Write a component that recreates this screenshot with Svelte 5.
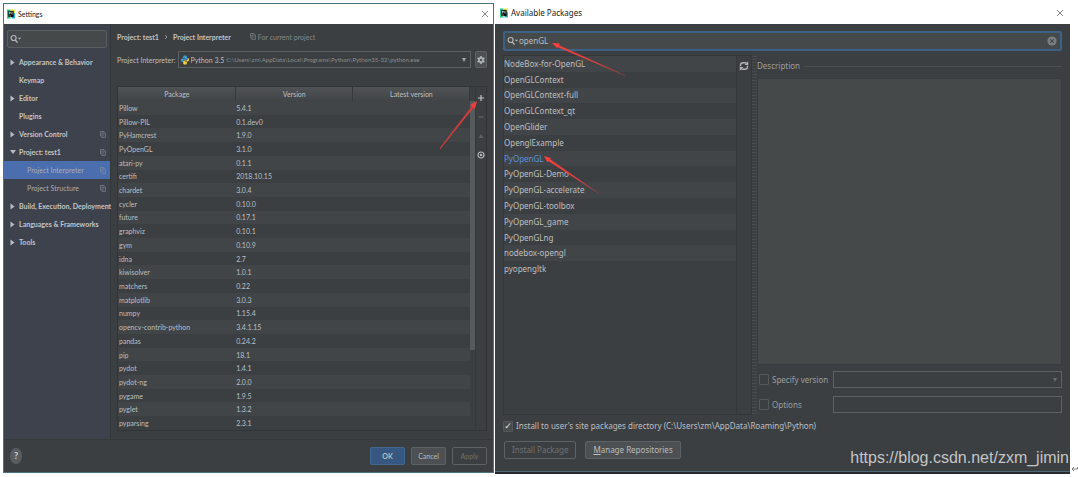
<script lang="ts">
	interface NavItem {
		label: string;
		arrow?: 'right' | 'down';
		child?: boolean;
		shared?: boolean;
		active?: boolean;
	}

	const navItems: NavItem[] = [
		{ label: 'Appearance & Behavior', arrow: 'right' },
		{ label: 'Keymap' },
		{ label: 'Editor', arrow: 'right' },
		{ label: 'Plugins' },
		{ label: 'Version Control', arrow: 'right', shared: true },
		{ label: 'Project: test1', arrow: 'down', shared: true },
		{ label: 'Project Interpreter', child: true, shared: true, active: true },
		{ label: 'Project Structure', child: true, shared: true },
		{ label: 'Build, Execution, Deployment', arrow: 'right' },
		{ label: 'Languages & Frameworks', arrow: 'right' },
		{ label: 'Tools', arrow: 'right' }
	];

	const installed = [
		['Pillow', '5.4.1'],
		['Pillow-PIL', '0.1.dev0'],
		['PyHamcrest', '1.9.0'],
		['PyOpenGL', '3.1.0'],
		['atari-py', '0.1.1'],
		['certifi', '2018.10.15'],
		['chardet', '3.0.4'],
		['cycler', '0.10.0'],
		['future', '0.17.1'],
		['graphviz', '0.10.1'],
		['gym', '0.10.9'],
		['idna', '2.7'],
		['kiwisolver', '1.0.1'],
		['matchers', '0.22'],
		['matplotlib', '3.0.3'],
		['numpy', '1.15.4'],
		['opencv-contrib-python', '3.4.1.15'],
		['pandas', '0.24.2'],
		['pip', '18.1'],
		['pydot', '1.4.1'],
		['pydot-ng', '2.0.0'],
		['pygame', '1.9.5'],
		['pyglet', '1.3.2'],
		['pyparsing', '2.3.1']
	];

	const available = [
		'NodeBox-for-OpenGL',
		'OpenGLContext',
		'OpenGLContext-full',
		'OpenGLContext_qt',
		'OpenGlider',
		'OpenglExample',
		'PyOpenGL',
		'PyOpenGL-Demo',
		'PyOpenGL-accelerate',
		'PyOpenGL-toolbox',
		'PyOpenGL_game',
		'PyOpenGLng',
		'nodebox-opengl',
		'pyopengltk'
	];

	let settingsQuery = $state('');
	let packageQuery = $state('openGL');
	let selectedPackage = $state('PyOpenGL');
	let userInstall = $state(true);
</script>

{#snippet appIcon()}
	<svg class="app-icon" viewBox="0 0 18 20" aria-hidden="true">
		<path d="M0 0h8l-4 20H0z" fill="#1fc7a0" />
		<path d="M6 0h12v9l-6 3z" fill="#e8ef50" />
		<path d="M10 20l2-10 6-2v12z" fill="#2bb7d6" />
		<path d="M0 13l10 7H0z" fill="#3bd98c" />
		<rect x="3" y="3" width="12" height="14" fill="#0b0b0b" />
		<path d="M5 5.500h2.500v3H5.500M5.500 5v6M13 6h-2.500v4H13M5 14.500h4" fill="none" stroke="#fff" stroke-width="1.200" />
	</svg>
{/snippet}

{#snippet closeIcon()}
	<svg class="close-icon" viewBox="0 0 8 8" aria-hidden="true">
		<path d="M1 1l6 6M7 1l-6 6" stroke="#777" stroke-width="0.900" />
	</svg>
{/snippet}

{#snippet searchIcon()}
	<svg class="search-icon" viewBox="0 0 12 10" aria-hidden="true">
		<circle cx="3.600" cy="4" r="2.500" fill="none" stroke="#b5b7b8" stroke-width="1.200" />
		<path d="M5.300 6L7.500 8.600" stroke="#b5b7b8" stroke-width="1.400" />
		<path d="M7.800 3.800h3.400L9.500 5.600z" fill="#b5b7b8" />
	</svg>
{/snippet}

{#snippet copyIcon()}
	<svg class="copy-icon" viewBox="0 0 6 7" aria-hidden="true">
		<path d="M1.500 5H0.500V0.500H4V1.500" fill="none" stroke="#8d949b" stroke-width="0.700" />
		<rect x="2" y="2" width="3.500" height="4.300" fill="none" stroke="#8d949b" stroke-width="0.700" />
		<path d="M3 3.700h1.500M3 4.900h1.500" stroke="#8d949b" stroke-width="0.500" />
	</svg>
{/snippet}

<main class="screen">
	<section class="window settings" aria-label="Settings">
		<header class="titlebar">
			{@render appIcon()}
			<h1>Settings</h1>
			<button class="bare" aria-label="Close settings">{@render closeIcon()}</button>
		</header>

		<div class="settings-body">
			<aside class="sidebar">
				<div class="side-search">
					{@render searchIcon()}
					<input type="text" aria-label="Search settings" bind:value={settingsQuery} />
				</div>
				<nav>
					{#each navItems as item}
						<a href="#settings" class="nav-item" class:child={item.child} class:active={item.active}>
							<span class="marker">
								{#if item.arrow}
									<svg viewBox="0 0 6 7" class:down={item.arrow === 'down'} aria-hidden="true">
										<path d="M0.500 0.500l4 3-4 3z" fill="#b9bcc0" />
									</svg>
								{/if}
							</span>
							<span class="nav-label">{item.label}</span>
							{#if item.shared}{@render copyIcon()}{/if}
						</a>
					{/each}
				</nav>
			</aside>

			<div class="content">
				<div class="crumbs">
					<strong>Project: test1</strong>
					<svg class="chevron" viewBox="0 0 4 6" aria-hidden="true">
						<path d="M1 1l2 2-2 2" fill="none" stroke="#9fa1a3" stroke-width="0.900" />
					</svg>
					<strong>Project Interpreter</strong>
					<span class="scope">{@render copyIcon()} For current project</span>
				</div>

				<div class="interpreter">
					<label for="interpreter">Project Interpreter:</label>
					<div class="combo">
						<svg class="python" viewBox="0 0 16 18" aria-hidden="true">
							<path d="M8 0C5 0 4 1 4 3v2h4.500v1H2.500C1 6 0 7.500 0 9.500S1 13 2.500 13H4v-2c0-1.500 1-2.500 2.500-2.500h4C11.500 8.500 12 7.500 12 6.500V3c0-2-1-3-4-3z" fill="#3b9bd6" />
							<path d="M8 18c3 0 4-1 4-3v-2H7.500v-1h6c1.500 0 2.500-1.500 2.500-3.500S15 5 13.500 5H13v2.500C13 9 12 10 10.500 10h-4C5 10 4.500 10.500 4.500 12v3c0 2 .5 3 3.500 3z" fill="#ffd13b" />
							<circle cx="6" cy="2.800" r="0.900" fill="#3c3f41" />
							<circle cx="10" cy="15.200" r="0.900" fill="#3c3f41" />
						</svg>
						<select id="interpreter">
							<option>Python 3.5</option>
						</select>
						<span class="path">C:\Users\zm\AppData\Local\Programs\Python\Python35-32\python.exe</span>
						<svg class="caret" viewBox="0 0 6 6" aria-hidden="true"><path d="M1 1h4L3 5z" fill="#a5a7a8" /></svg>
					</div>
					<button class="gear" aria-label="Interpreter settings">
						<svg viewBox="0 0 10 12" aria-hidden="true">
							<path d="M5 2v8M1.600 4l6.800 4M8.400 4L1.600 8" stroke="#aeb2b5" stroke-width="1.600" />
							<circle cx="5" cy="6" r="2.100" fill="#52575a" stroke="#aeb2b5" stroke-width="1.700" />
						</svg>
					</button>
				</div>

				<div class="packages">
					<table>
						<thead>
							<tr><th>Package</th><th>Version</th><th>Latest version</th></tr>
						</thead>
						<tbody>
							{#each installed as [name, version]}
								<tr><td>{name}</td><td>{version}</td><td></td></tr>
							{/each}
						</tbody>
					</table>
					<div class="scroll"></div>
					<div class="tools">
						<button class="bare" aria-label="Install package">
							<svg viewBox="0 0 8 8" aria-hidden="true"><path d="M4 1v6M1 4h6" stroke="#c3c5c6" stroke-width="1.200" /></svg>
						</button>
						<button class="bare" aria-label="Uninstall package">
							<svg viewBox="0 0 8 8" aria-hidden="true"><path d="M1.500 4h5" stroke="#6a6d6f" stroke-width="1" /></svg>
						</button>
						<button class="bare" aria-label="Upgrade package">
							<svg viewBox="0 0 8 8" aria-hidden="true"><path d="M1.500 6h5L4 2z" fill="#5e6163" /></svg>
						</button>
						<button class="bare" aria-label="Show early releases">
							<svg viewBox="0 0 8 8" aria-hidden="true">
								<circle cx="4" cy="4" r="3" fill="none" stroke="#b8babb" stroke-width="1.200" />
								<circle cx="4" cy="4" r="1.200" fill="#b8babb" />
							</svg>
						</button>
					</div>
				</div>
			</div>
		</div>

		<footer class="settings-footer">
			<button class="help" aria-label="Help">?</button>
			<button class="push primary">OK</button>
			<button class="push">Cancel</button>
			<button class="push" disabled>Apply</button>
		</footer>

		<svg class="pointer to-plus" viewBox="0 0 40 50" aria-hidden="true">
			<path d="M1.500 48.500L1 48 34 5l1.500 1.200z" fill="#d93c3c" stroke="#d93c3c" stroke-width="0.400" />
			<path d="M38 1l-2 8-5-4z" fill="#f03c3c" />
		</svg>
	</section>

	<div class="right-side">
		<section class="window available" aria-label="Available Packages">
			<header class="titlebar">
				{@render appIcon()}
				<h2>Available Packages</h2>
				<button class="bare" aria-label="Close available packages">{@render closeIcon()}</button>
			</header>

			<div class="available-body">
				<div class="package-search">
					{@render searchIcon()}
					<input type="text" aria-label="Search packages" bind:value={packageQuery} />
					<button class="bare" aria-label="Clear search">
						<svg viewBox="0 0 10 10" aria-hidden="true">
							<circle cx="5" cy="5" r="4.600" fill="#7b7e80" />
							<path d="M3.300 3.300l3.400 3.400M6.700 3.300L3.300 6.700" stroke="#45494a" stroke-width="1.200" />
						</svg>
					</button>
				</div>

				<div class="split">
					<div class="list-pane">
						<ul>
							{#each available as name}
								<li class:selected={name === selectedPackage}>{name}</li>
							{/each}
						</ul>
						<button class="bare refresh" aria-label="Reload list">
							<svg viewBox="0 0 10 10" aria-hidden="true">
								<path d="M1.500 5.200V4A2.500 2.500 0 0 1 4 1.700h3.500M8.500 4.800V6A2.500 2.500 0 0 1 6 8.300H2.500" fill="none" stroke="#b4b6b7" stroke-width="1.400" />
								<path d="M5.600 3.900h3.600V0.300zM4.400 6.100H0.800v3.600z" fill="#b4b6b7" />
							</svg>
						</button>
					</div>
					<div class="divider"></div>
					<div class="detail-pane">
						<label class="legend" for="description"><span>Description</span></label>
						<textarea id="description" readonly></textarea>
						<div class="option">
							<input type="checkbox" id="use-version" disabled />
							<label for="use-version">Specify version</label>
							<div class="combo">
								<select aria-label="Version" disabled></select>
								<svg class="caret" viewBox="0 0 6 6" aria-hidden="true"><path d="M1 1h4L3 5z" fill="#686b6d" /></svg>
							</div>
						</div>
						<div class="option">
							<input type="checkbox" id="use-options" disabled />
							<label for="use-options">Options</label>
							<input type="text" class="combo" aria-label="Install options" disabled />
						</div>
					</div>
				</div>

				<div class="user-install">
					<input type="checkbox" id="user-install" bind:checked={userInstall} />
					<label for="user-install">Install to user's site packages directory (C:\Users\zm\AppData\Roaming\Python)</label>
				</div>

				<div class="actions">
					<button class="push" disabled>Install Package</button>
					<button class="push"><u>M</u>anage Repositories</button>
				</div>
			</div>

			<svg class="pointer to-query" viewBox="0 0 74 35" aria-hidden="true">
				<defs>
					<linearGradient id="fade"><stop offset="0" stop-color="#ff3d3d" /><stop offset="0.600" stop-color="#e04040" /><stop offset="1" stop-color="#7b4042" /></linearGradient>
				</defs>
				<path d="M5 4.500L73 33.500 4.500 2.500z" fill="url(#fade)" stroke="url(#fade)" stroke-width="0.600" />
				<path d="M0 1l8 .5-3 4.500z" fill="#ff3d3d" />
			</svg>
			<svg class="pointer to-package" viewBox="0 0 57 38" aria-hidden="true">
				<path d="M5 4.500L56 37.500 5.500 2.500z" fill="url(#fade)" stroke="url(#fade)" stroke-width="0.600" />
				<path d="M1 0l7 2-3.500 4.500z" fill="#ff3d3d" />
			</svg>
			<span class="watermark">https://blog.csdn.net/zxm_jimin</span>
		</section>
		<div class="strip"></div>
	</div>

	<svg class="return" viewBox="0 0 7 6" aria-hidden="true">
		<path d="M6.500 1v2H1M3 1L1 3l2 2" fill="none" stroke="#666" stroke-width="0.800" />
	</svg>
</main>

<style>
	:global(body) {
		margin: 0;
		background: #fff;
	}

	.screen {
		position: relative;
		display: grid;
		grid-template-columns: minmax(0, 491fr) minmax(0, 575fr);
		align-items: start;
		gap: 1px;
		padding: 0 8px 0 3px;
		font-family: Lato, Roboto, sans-serif;
		font-size: 7px;
		line-height: 12px;
		color: #bcbfc1;
	}

	button,
	input,
	select,
	textarea {
		box-sizing: border-box;
		margin: 0;
		padding: 0;
		border: 0;
		background: none;
		color: inherit;
		font: inherit;
		outline: 0;
		appearance: none;
	}

	svg {
		display: block;
		flex: none;
	}

	.window {
		position: relative;
		box-sizing: border-box;
		display: flex;
		flex-direction: column;
		background: #3c3f41;
	}

	.settings {
		margin-top: 3px;
		border: 1px solid #4d7482;
	}

	.titlebar {
		display: flex;
		align-items: center;
		gap: 3px;
		height: 20px;
		padding: 0 4px 0 3px;
		background: #fff;
		color: #222;
	}

	.titlebar h1,
	.titlebar h2 {
		flex: 1;
		margin: 0;
		font-size: inherit;
		font-weight: 400;
	}

	.app-icon {
		width: 8px;
		height: 10px;
	}

	.close-icon {
		width: 8px;
		height: 8px;
	}

	.search-icon {
		width: 12px;
		height: 10px;
	}

	.copy-icon {
		width: 6px;
		height: 7px;
		opacity: 0.800;
	}

	.settings-body {
		display: grid;
		grid-template-columns: minmax(0, 107fr) minmax(0, 382fr);
		border-bottom: 1px solid #36393b;
	}

	.sidebar {
		padding-top: 6px;
		background: #3d424d;
		border-right: 1px solid #34373a;
	}

	.side-search {
		display: flex;
		align-items: center;
		height: 16px;
		margin: 0 3px 5px;
		padding-left: 2px;
		border: 1px solid #5a5e61;
		border-radius: 2px;
		background: #45494a;
	}

	.side-search input,
	.package-search input {
		flex: 1;
		min-width: 0;
	}

	.nav-item {
		display: flex;
		align-items: center;
		height: 18px;
		padding-right: 4px;
		color: #c2c5c9;
		font-weight: 700;
		text-decoration: none;
		white-space: nowrap;
	}

	.marker {
		flex: none;
		width: 15px;
		padding-left: 6px;
		box-sizing: border-box;
	}

	.marker svg {
		width: 6px;
		height: 7px;
	}

	.down {
		transform: rotate(90deg);
	}

	.nav-label {
		flex: 1;
		min-width: 0;
	}

	.child {
		color: #a9adb2;
		font-weight: 400;
	}

	.child .marker {
		width: 23px;
	}

	.active {
		background: #4b6eaf;
	}

	.content {
		padding: 6px 6px 8px;
	}

	.crumbs {
		display: flex;
		align-items: center;
		gap: 5px;
		height: 13px;
		color: #c0c2c4;
	}

	.chevron {
		width: 4px;
		height: 6px;
	}

	.scope {
		display: flex;
		gap: 2px;
		align-items: center;
		margin-left: 14px;
		color: #85888a;
	}

	.interpreter {
		display: flex;
		align-items: center;
		margin: 8px 0 18px;
		white-space: nowrap;
	}

	.interpreter .combo {
		flex: 1;
		margin: 0 4px 0 2px;
	}

	.combo {
		box-sizing: border-box;
		display: flex;
		align-items: center;
		height: 17px;
		padding: 0 3px 0 2px;
		border: 1px solid #5e6163;
		background: #3c3f41;
	}

	.python {
		width: 8px;
		height: 10px;
		margin-right: 2px;
	}

	#interpreter {
		field-sizing: content;
	}

	.path {
		flex: 1;
		margin-left: 2px;
		color: #8a8d8f;
		font-size: 6px;
	}

	.caret {
		width: 6px;
		height: 6px;
	}

	.gear {
		width: 12px;
		height: 17px;
		border: 1px solid #5e6163;
		border-radius: 2px;
		background: #4c5052;
	}

	.gear svg {
		width: 10px;
		height: 12px;
	}

	.packages {
		display: grid;
		grid-template-columns: 1fr 5px 11px;
		border: 1px solid #323537;
	}

	table {
		width: 100%;
		height: 343px;
		border-collapse: collapse;
		table-layout: fixed;
	}

	th,
	td {
		padding: 0 0 0 1px;
		font-weight: 400;
		line-height: 12px;
		text-align: left;
	}

	th {
		height: 14px;
		border-right: 1px solid #35383a;
		background: linear-gradient(#505355, #414446);
		text-align: center;
	}

	tbody tr:nth-child(odd) {
		background: #414547;
	}

	.scroll {
		height: 249px;
		margin-top: 14px;
		background: #565a5c;
	}

	.tools {
		display: flex;
		flex-direction: column;
		align-items: center;
		gap: 11px;
		padding-top: 7px;
		border-left: 1px solid #353839;
	}

	.tools svg {
		width: 8px;
		height: 8px;
	}

	.settings-footer {
		display: flex;
		align-items: center;
		gap: 6px;
		height: 32px;
		padding: 0 6px;
	}

	.help {
		width: 12px;
		height: 16px;
		margin-right: auto;
		border-radius: 50%;
		background: #5a5d5f;
		color: #d0d2d3;
		font-size: 9px;
		font-weight: 700;
	}

	.push {
		height: 18px;
		border: 1px solid #5e6264;
		border-radius: 2px;
		background: #4c5052;
		color: #bbbdbe;
	}

	.settings-footer .push {
		width: 35px;
	}

	.push.primary {
		border-color: #43688f;
		background: #365880;
		font-weight: 700;
	}

	.push:disabled {
		background: #3c3f41;
		color: #6e7173;
	}

	.right-side {
		font-family: 'Noto Sans', 'Open Sans', sans-serif;
		font-size: 8px;
	}

	.available {
		border-bottom: 1px solid #4d6a78;
	}

	.available .titlebar {
		height: 24px;
		padding: 2px 6px 0 5px;
		box-sizing: border-box;
	}

	.available-body {
		padding: 7px 8px 12px;
	}

	.package-search {
		box-sizing: border-box;
		display: flex;
		align-items: center;
		height: 20px;
		padding: 0 3px 0 2px;
		border: 2px solid #3d6185;
		border-radius: 2px;
		background: #45494a;
	}

	.package-search svg {
		height: 10px;
	}

	.split {
		display: grid;
		grid-template-columns: minmax(0, 249fr) 5px minmax(0, 305fr);
		margin-top: 4px;
	}

	.list-pane {
		display: grid;
		grid-template-columns: 1fr 15px;
		border: 1px solid #343739;
	}

	ul {
		display: grid;
		grid-auto-rows: 1fr;
		height: 221px;
		margin: 0;
		padding: 0;
		list-style: none;
	}

	li {
		display: flex;
		align-items: center;
	}

	li:nth-child(odd) {
		background: #414547;
	}

	.selected {
		color: #5a90dd;
	}

	.refresh {
		display: flex;
		justify-content: center;
		padding-top: 5px;
		border-left: 1px solid #353839;
	}

	.refresh svg {
		width: 10px;
		height: 10px;
	}

	.divider {
		background: radial-gradient(circle, #55595b 0 1px, transparent 1px) 0 0 / 2px 3px;
		opacity: 0.500;
	}

	.detail-pane {
		display: flex;
		flex-direction: column;
		color: #9b9ea0;
	}

	.legend {
		display: flex;
		align-items: center;
		gap: 4px;
		padding: 5px 0 6px;
	}

	.legend::after {
		content: '';
		flex: 1;
		height: 1px;
		background: #4b4e50;
	}

	textarea {
		height: 287px;
		margin-bottom: 6px;
		border: 1px solid #393c3e;
		background: #45494a;
		resize: none;
	}

	.option {
		display: grid;
		grid-template-columns: 10px 58px 1fr;
		gap: 3px;
		align-items: center;
		margin-bottom: 8px;
		padding-left: 2px;
	}

	.option:last-child {
		margin-bottom: 2px;
	}

	.option .combo {
		min-width: 0;
	}

	.option select {
		flex: 1;
	}

	input[type='checkbox'] {
		width: 10px;
		height: 11px;
		border: 1px solid #55585a;
		border-radius: 1px;
	}

	#user-install {
		display: grid;
		place-content: center;
		background: #484c4e;
	}

	#user-install:checked::before {
		content: '✓';
		color: #e0e2e3;
		font: 700 9px/9px 'DejaVu Sans', sans-serif;
	}

	.user-install {
		display: flex;
		align-items: center;
		gap: 3px;
		margin: 5px 0 9px;
	}

	.actions {
		display: flex;
		gap: 9px;
		margin-left: 1px;
	}

	.actions .push {
		padding: 0 7px;
	}

	.strip {
		height: 2px;
		background: #292c2e;
	}

	/* red annotation arrows drawn over the windows */
	.pointer {
		position: absolute;
		pointer-events: none;
	}

	.to-plus {
		top: 96px;
		right: 14px;
		width: 40px;
		height: 50px;
	}

	.to-query {
		top: 42px;
		left: 57px;
		width: 74px;
		height: 35px;
	}

	.to-package {
		top: 156px;
		left: 48px;
		width: 57px;
		height: 38px;
	}

	.watermark {
		position: absolute;
		right: 1px;
		bottom: 1px;
		color: #c3c5c6;
		font: 16px/24px 'Liberation Sans', Arial, sans-serif;
	}

	.return {
		position: absolute;
		right: 0;
		bottom: 2px;
		width: 7px;
		height: 6px;
	}
</style>
